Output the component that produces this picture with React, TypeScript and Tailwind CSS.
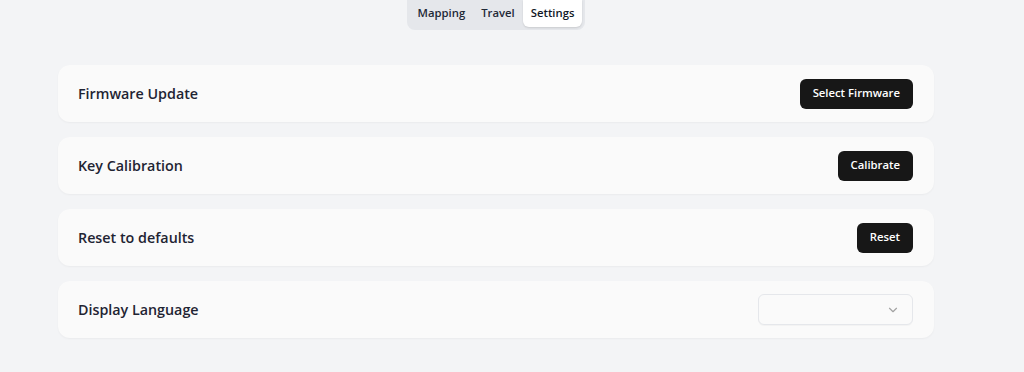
import { ChevronDown } from "lucide-react";

const tabs = ["Mapping", "Travel", "Settings"];

function ActionButton({ label }: { label: string }) {
  return (
    <button className="h-[30px] rounded-md bg-[#171717] px-[13px] text-[11.3px] font-semibold text-white">
      {label}
    </button>
  );
}

function SettingRow({ title, children }: { title: string; children: React.ReactNode }) {
  return (
    <div className="flex h-[57px] items-center justify-between rounded-xl bg-[#fafafa] pl-5 pr-[21px] shadow-[0_1px_2px_rgba(0,0,0,0.04)]">
      <span className="text-[14.3px] font-semibold text-[#1f2433]">{title}</span>
      {children}
    </div>
  );
}

export default function App() {
  return (
    <div
      className="min-h-[372px] w-full bg-[#f3f4f6]"
      style={{ fontFamily: '"Open Sans", "Noto Sans", sans-serif' }}
    >
      <div className="mx-[58px] w-[876px]">
        <div className="flex justify-center">
          <div className="flex items-center rounded-b-lg bg-[#e5e7eb] px-[3px] pb-[3px]">
            {tabs.map((t) => (
              <div
                key={t}
                className={
                  t === "Settings"
                    ? "flex h-[27px] items-center rounded-b-md bg-white px-2 text-[11.3px] font-semibold text-[#111827] shadow-[0_1px_2px_rgba(0,0,0,0.12)]"
                    : "flex h-[27px] items-center px-2 text-[11.3px] font-semibold text-[#1f2937]"
                }
              >
                {t}
              </div>
            ))}
          </div>
        </div>

        <div className="mt-[35px] flex flex-col gap-[15px]">
          <SettingRow title="Firmware Update">
            <ActionButton label="Select Firmware" />
          </SettingRow>
          <SettingRow title="Key Calibration">
            <ActionButton label="Calibrate" />
          </SettingRow>
          <SettingRow title="Reset to defaults">
            <ActionButton label="Reset" />
          </SettingRow>
          <SettingRow title="Display Language">
            <div className="flex h-[31px] w-[155px] items-center justify-end rounded-md border border-[#e5e7eb] bg-[#fafafa] pr-3 shadow-[0_1px_1px_rgba(0,0,0,0.03)]">
              <ChevronDown className="h-3.5 w-3.5 text-[#a3a3a3]" strokeWidth={2} />
            </div>
          </SettingRow>
        </div>
      </div>
    </div>
  );
}
